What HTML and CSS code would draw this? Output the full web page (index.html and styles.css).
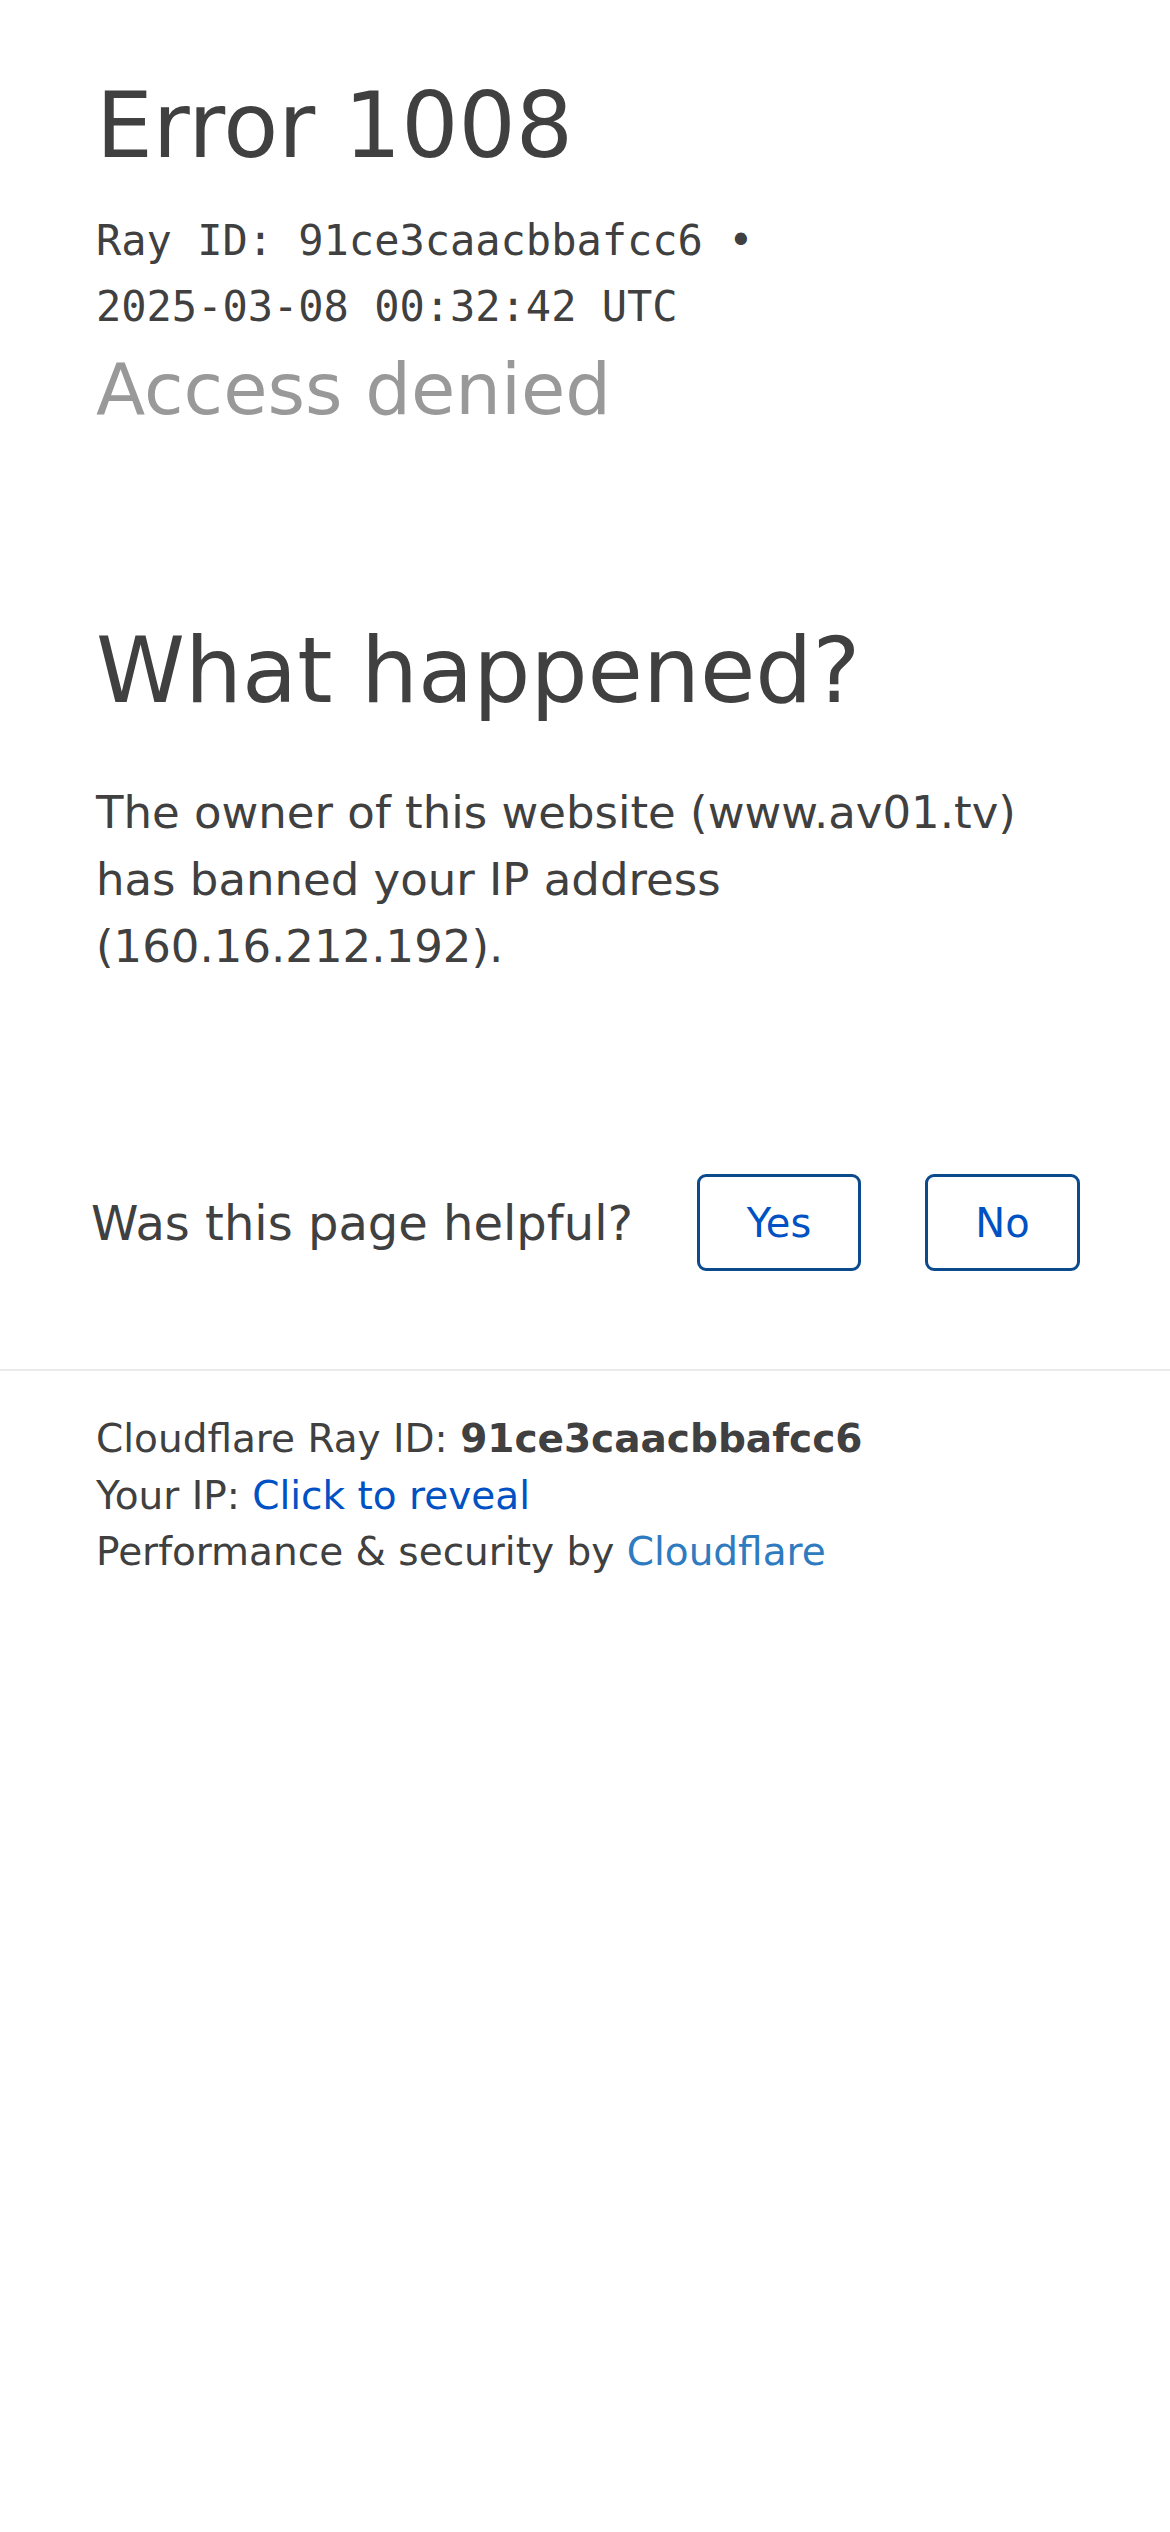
FILE: index.html
```html
<!DOCTYPE html>
<html lang="en">
<head>
<meta charset="utf-8">
<title>Access denied | www.av01.tv used Cloudflare to restrict access</title>
<link rel="stylesheet" href="styles.css">
</head>
<body>
<main class="page">
  <section class="wrapper header">
    <h1 class="title"><span>Error</span> <span>1008</span></h1>
    <div class="ray">Ray ID: 91ce3caacbbafcc6 • <span class="ray-time">2025-03-08 00:32:42 UTC</span></div>
    <h2 class="subtitle">Access denied</h2>
  </section>

  <section class="wrapper what">
    <h2 class="what-title">What happened?</h2>
    <p class="what-text">The owner of this website (www.av01.tv) has banned your IP address (160.16.212.192).</p>
  </section>

  <div class="feedback">
    <span class="feedback-q">Was this page helpful?</span>
    <button class="btn btn-yes" type="button">Yes</button>
    <button class="btn btn-no" type="button">No</button>
  </div>

  <div class="divider"></div>

  <footer class="wrapper footer">
    <p class="footer-line">Cloudflare Ray ID: <strong class="footer-ray">91ce3caacbbafcc6</strong></p>
    <p class="footer-line">Your IP: <a class="reveal" href="#">Click to reveal</a></p>
    <p class="footer-line">Performance &amp; security by <a class="cf-link" href="#">Cloudflare</a></p>
  </footer>
</main>
</body>
</html>
```

FILE: styles.css
```css
html, body {
  margin: 0;
  padding: 0;
  background: #ffffff;
}

body {
  font-family: "DejaVu Sans", "Liberation Sans", sans-serif;
  color: #404040;
}

.page {
  display: flex;
  flex-direction: column;
}

.wrapper {
  padding: 0 96px;
}

.header {
  padding-top: 72px;
}

.title {
  margin: 0;
  font-size: 90px;
  font-weight: normal;
  line-height: 108px;
  color: #404040;
}

.ray {
  margin-top: 28px;
  font-family: "DejaVu Sans Mono", "Liberation Mono", monospace;
  font-size: 42px;
  line-height: 66px;
  color: #404040;
}

.ray-time {
  white-space: nowrap;
}

.subtitle {
  margin: 6px 0 0;
  font-size: 72px;
  font-weight: normal;
  line-height: 86px;
  color: #999999;
}

.what {
  margin-top: 185px;
}

.what-title {
  margin: 0;
  font-size: 90px;
  font-weight: normal;
  line-height: 108px;
  color: #404040;
}

.what-text {
  margin: 54px 0 0;
  font-size: 45px;
  line-height: 67px;
  color: #404040;
}

.feedback {
  margin-top: 194px;
  padding: 0 0 0 91px;
  display: flex;
  align-items: center;
  height: 97px;
}

.feedback-q {
  flex-shrink: 0;
  white-space: nowrap;
  font-size: 48px;
  line-height: 60px;
  color: #404040;
}

.btn {
  flex-shrink: 0;
  box-sizing: border-box;
  height: 97px;
  margin-left: 64px;
  padding: 0;
  border: 3px solid #0b4a8c;
  border-radius: 9px;
  background: #ffffff;
  color: #0051c3;
  font-family: "DejaVu Sans", "Liberation Sans", sans-serif;
  font-size: 40px;
  line-height: 1;
  display: flex;
  align-items: center;
  justify-content: center;
}

.btn-yes {
  width: 164px;
}

.btn-no {
  width: 155px;
}

.divider {
  margin-top: 98px;
  height: 2px;
  background: #ebebeb;
}

.footer {
  padding-top: 40px;
}

.footer-line {
  margin: 0;
  font-size: 39px;
  line-height: 56.5px;
  color: #404040;
}

.footer-ray {
  font-weight: bold;
  color: #404040;
}

.reveal {
  color: #0051c3;
  text-decoration: none;
}

.cf-link {
  color: #2f7bbf;
  text-decoration: none;
}
```
